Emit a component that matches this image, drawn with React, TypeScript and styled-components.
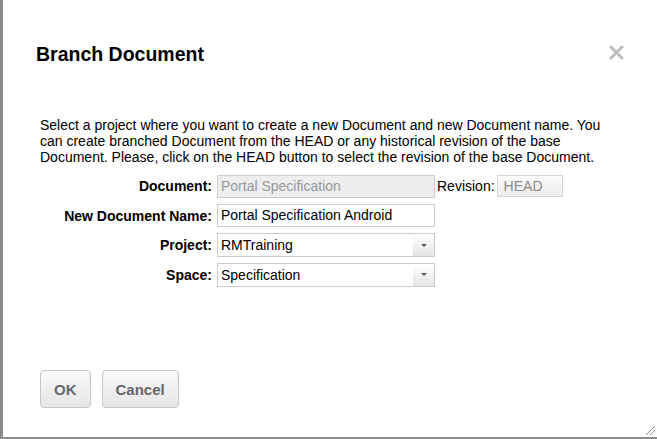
import React from 'react'
import styled, { createGlobalStyle } from 'styled-components'

const GlobalStyle = createGlobalStyle`
  html, body {
    margin: 0;
    padding: 0;
    background: #ffffff;
  }
  body {
    font-family: "Liberation Sans", Arial, sans-serif;
    color: #000;
  }
`

const Dialog = styled.div`
  position: relative;
  width: 657px;
  height: 439px;
  box-sizing: border-box;
  border-left: 3px solid #8c8c8c;
  border-bottom: 2px solid #8c8c8c;
  background: #fff;
  display: flex;
  flex-direction: column;
`

const Header = styled.header`
  display: flex;
  justify-content: space-between;
  align-items: flex-start;
  padding: 43px 33px 0 33px;
`

const Title = styled.h2`
  margin: 0;
  font-size: 19.5px;
  line-height: 22px;
  font-weight: bold;
  color: #000;
`

const CloseButton = styled.button`
  margin: 2px 0 0;
  padding: 0;
  border: 0;
  background: none;
  width: 15px;
  height: 15px;
  cursor: pointer;
  display: flex;
`

const Body = styled.div`
  padding: 52px 37px 0 37px;
`

const Intro = styled.p`
  margin: 0;
  font-size: 14px;
  line-height: 16px;
  color: #000;
`

const Form = styled.div`
  margin-top: 9px;
  display: grid;
  grid-template-columns: 172px auto;
  grid-auto-rows: 24px;
  column-gap: 5px;
  row-gap: 5.5px;
`

const Label = styled.label`
  font-size: 14px;
  font-weight: bold;
  text-align: right;
  align-self: center;
`

const Field = styled.div`
  display: flex;
  align-items: center;
  gap: 2px;
`

const TextInput = styled.div<{ $disabled?: boolean }>`
  width: 218px;
  height: 23px;
  box-sizing: border-box;
  border: 1px solid #cccccc;
  background: ${p => (p.$disabled ? '#eeeeee' : '#ffffff')};
  color: ${p => (p.$disabled ? '#999999' : '#000000')};
  font-size: 14px;
  line-height: 21px;
  padding: 0 3px;
  white-space: nowrap;
  overflow: hidden;
`

const InlineLabel = styled.span`
  font-size: 14px;
  color: #000;
`

const RevisionBox = styled.div`
  width: 66px;
  height: 22px;
  box-sizing: border-box;
  border: 1px solid #d6d6d6;
  background: linear-gradient(#fbfbfb, #ececec);
  color: #8a8a8a;
  font-size: 14px;
  line-height: 20px;
  padding-left: 6px;
`

const Select = styled.div`
  width: 218px;
  height: 24px;
  box-sizing: border-box;
  border: 1px solid #cccccc;
  background: #fff;
  display: flex;
`

const SelectValue = styled.span`
  flex: 1;
  font-size: 14px;
  line-height: 22px;
  padding-left: 3px;
`

const SelectArrow = styled.span`
  width: 21px;
  display: flex;
  align-items: center;
  justify-content: center;
  background: linear-gradient(#ffffff, #e4e4e4);
  &::after {
    content: '';
    border-left: 3px solid transparent;
    border-right: 3px solid transparent;
    border-top: 3px solid #555;
  }
`

const Footer = styled.footer`
  margin-top: auto;
  display: flex;
  gap: 11px;
  padding: 0 0 29px 37px;
`

const Button = styled.button`
  height: 38px;
  box-sizing: border-box;
  padding: 0 13px;
  border: 1px solid #c6c6c6;
  border-radius: 4px;
  background: linear-gradient(#f9f9f9, #e6e6e6);
  color: #666666;
  font-family: "Liberation Sans", Arial, sans-serif;
  font-size: 15px;
  font-weight: bold;
  cursor: pointer;
`

const ResizeGrip = styled.svg`
  position: absolute;
  right: 2px;
  bottom: 2px;
`

const CloseIcon = () => (
  <svg width="15" height="15" viewBox="0 0 15 15">
    <path d="M2 2 L13 13 M13 2 L2 13" stroke="#bdbdbd" strokeWidth="3" strokeLinecap="round" />
  </svg>
)

const App = () => {
  return (
    <>
      <GlobalStyle />
      <Dialog>
        <Header>
          <Title>Branch Document</Title>
          <CloseButton aria-label="Close">
            <CloseIcon />
          </CloseButton>
        </Header>

        <Body>
          <Intro>
            Select a project where you want to create a new Document and new Document name. You
            can create branched Document from the HEAD or any historical revision of the base
            Document. Please, click on the HEAD button to select the revision of the base Document.
          </Intro>

          <Form>
            <Label>Document:</Label>
            <Field>
              <TextInput $disabled>Portal Specification</TextInput>
              <InlineLabel>Revision:</InlineLabel>
              <RevisionBox>HEAD</RevisionBox>
            </Field>

            <Label>New Document Name:</Label>
            <Field>
              <TextInput>Portal Specification Android</TextInput>
            </Field>

            <Label>Project:</Label>
            <Field>
              <Select>
                <SelectValue>RMTraining</SelectValue>
                <SelectArrow />
              </Select>
            </Field>

            <Label>Space:</Label>
            <Field>
              <Select>
                <SelectValue>Specification</SelectValue>
                <SelectArrow />
              </Select>
            </Field>
          </Form>
        </Body>

        <Footer>
          <Button>OK</Button>
          <Button>Cancel</Button>
        </Footer>

        <ResizeGrip width="10" height="10" viewBox="0 0 10 10">
          <path d="M1 10 L10 1 M5 10 L10 5" stroke="#8a8a8a" strokeWidth="1" />
        </ResizeGrip>
      </Dialog>
    </>
  )
}

export default App
